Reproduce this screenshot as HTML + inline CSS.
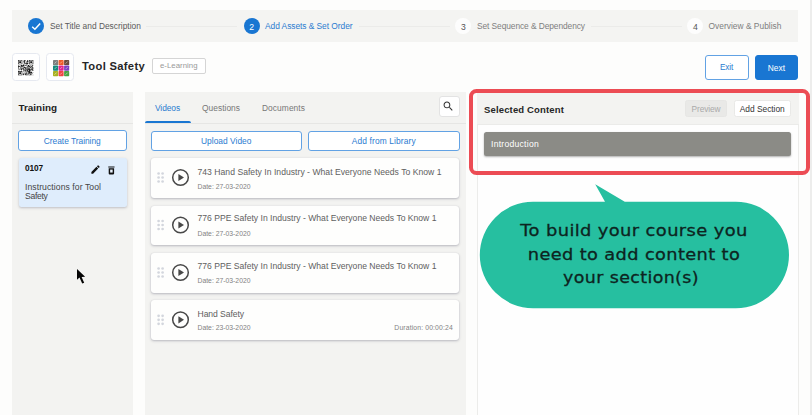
<!DOCTYPE html>
<html lang="en">
<head>
<meta charset="utf-8">
<title>Tool Safety - Add Assets &amp; Set Order</title>
<style>
*{box-sizing:border-box;margin:0;padding:0}
html,body{width:812px;height:415px;overflow:hidden;background:#fdfdfc;font-family:'Liberation Sans',sans-serif}
#app{position:relative;width:812px;height:415px;overflow:hidden;background:#fdfdfc}
.abs{position:absolute}
.t{position:absolute;height:20px;line-height:20px;white-space:nowrap}
.panel{position:absolute;background:#f3f3f1}
.btn{position:absolute;background:#fff;border:1px solid #62a2e4;border-radius:3px}
.card{position:absolute;left:150.5px;width:308.5px;height:39.8px;background:#fefefd;border-radius:3px;box-shadow:0 1px 2.5px rgba(90,90,110,.38),0 0 1px rgba(90,90,110,.18)}
.sq{position:absolute;width:28px;height:28px;top:53.3px;background:#fff;border:1px solid #e6e9f0;border-radius:3.5px}
.line{position:absolute;height:1px;background:#ebebe9;top:25.7px}
.circ{position:absolute;width:16.4px;height:16.4px;border-radius:50%;top:17.7px}
svg{position:absolute;overflow:visible}
</style>
</head>
<body>
<div id="app">

<!-- stepper -->
<div class="panel" style="left:12px;top:10px;width:786px;height:32px;background:#f4f4f2"></div>
<div class="circ" style="left:27.7px;background:#1976d2"></div>
<svg style="left:27.7px;top:17.7px" width="16.4" height="16.4" viewBox="0 0 16.4 16.4"><path d="M4.2 8.8 L6.9 11.3 L12.2 5.6" fill="none" stroke="#fff" stroke-width="1.5"/></svg>
<div class="line" style="left:146px;width:91px"></div>
<div class="circ" style="left:243.500px;background:#1976d2"></div>
<div class="line" style="left:359px;width:91px"></div>
<div class="circ" style="left:454.8px;background:#fdfdfd"></div>
<div class="line" style="left:591px;width:90.5px"></div>
<div class="circ" style="left:686.8px;background:#fdfdfd"></div>

<!-- title row -->
<div class="sq" style="left:11.7px"></div>
<div class="sq" style="left:46.4px"></div>
<svg style="left:17.9px;top:59.9px" width="15.3" height="15.3" viewBox="0 0 15.3 15.3"><path fill="#161616" d="M0.00 0.00h4.28v0.61h-4.28zM6.12 0.00h1.84v0.61h-1.84zM9.18 0.00h0.61v0.61h-0.61zM11.02 0.00h4.28v0.61h-4.28zM0.00 0.61h0.61v0.61h-0.61zM3.67 0.61h0.61v0.61h-0.61zM5.51 0.61h1.22v0.61h-1.22zM9.18 0.61h1.22v0.61h-1.22zM11.02 0.61h0.61v0.61h-0.61zM14.69 0.61h0.61v0.61h-0.61zM0.00 1.22h0.61v0.61h-0.61zM1.22 1.22h1.84v0.61h-1.84zM3.67 1.22h0.61v0.61h-0.61zM5.51 1.22h1.84v0.61h-1.84zM8.57 1.22h1.84v0.61h-1.84zM11.02 1.22h0.61v0.61h-0.61zM12.24 1.22h1.84v0.61h-1.84zM14.69 1.22h0.61v0.61h-0.61zM0.00 1.84h0.61v0.61h-0.61zM1.22 1.84h1.84v0.61h-1.84zM3.67 1.84h0.61v0.61h-0.61zM5.51 1.84h1.22v0.61h-1.22zM7.96 1.84h0.61v0.61h-0.61zM9.18 1.84h1.22v0.61h-1.22zM11.02 1.84h0.61v0.61h-0.61zM12.24 1.84h1.84v0.61h-1.84zM14.69 1.84h0.61v0.61h-0.61zM0.00 2.45h0.61v0.61h-0.61zM1.22 2.45h1.84v0.61h-1.84zM3.67 2.45h0.61v0.61h-0.61zM6.12 2.45h1.22v0.61h-1.22zM8.57 2.45h0.61v0.61h-0.61zM11.02 2.45h0.61v0.61h-0.61zM12.24 2.45h1.84v0.61h-1.84zM14.69 2.45h0.61v0.61h-0.61zM0.00 3.06h0.61v0.61h-0.61zM3.67 3.06h0.61v0.61h-0.61zM6.12 3.06h0.61v0.61h-0.61zM7.34 3.06h3.06v0.61h-3.06zM11.02 3.06h0.61v0.61h-0.61zM14.69 3.06h0.61v0.61h-0.61zM0.00 3.67h4.28v0.61h-4.28zM4.90 3.67h0.61v0.61h-0.61zM6.12 3.67h0.61v0.61h-0.61zM7.34 3.67h0.61v0.61h-0.61zM8.57 3.67h1.22v0.61h-1.22zM11.02 3.67h4.28v0.61h-4.28zM5.51 4.28h0.61v0.61h-0.61zM8.57 4.28h0.61v0.61h-0.61zM0.61 4.90h0.61v0.61h-0.61zM2.45 4.90h1.84v0.61h-1.84zM4.90 4.90h1.22v0.61h-1.22zM7.34 4.90h0.61v0.61h-0.61zM8.57 4.90h0.61v0.61h-0.61zM9.79 4.90h1.22v0.61h-1.22zM12.85 4.90h0.61v0.61h-0.61zM14.08 4.90h1.22v0.61h-1.22zM0.00 5.51h0.61v0.61h-0.61zM3.06 5.51h3.67v0.61h-3.67zM7.34 5.51h1.22v0.61h-1.22zM9.79 5.51h1.84v0.61h-1.84zM12.24 5.51h0.61v0.61h-0.61zM14.08 5.51h0.61v0.61h-0.61zM0.00 6.12h2.45v0.61h-2.45zM3.06 6.12h1.84v0.61h-1.84zM5.51 6.12h0.61v0.61h-0.61zM9.18 6.12h3.06v0.61h-3.06zM12.85 6.12h1.84v0.61h-1.84zM0.00 6.73h0.61v0.61h-0.61zM1.84 6.73h0.61v0.61h-0.61zM3.67 6.73h0.61v0.61h-0.61zM5.51 6.73h1.22v0.61h-1.22zM7.96 6.73h0.61v0.61h-0.61zM11.02 6.73h0.61v0.61h-0.61zM12.24 6.73h0.61v0.61h-0.61zM0.00 7.34h0.61v0.61h-0.61zM2.45 7.34h0.61v0.61h-0.61zM3.67 7.34h0.61v0.61h-0.61zM5.51 7.34h2.45v0.61h-2.45zM8.57 7.34h1.22v0.61h-1.22zM10.40 7.34h0.61v0.61h-0.61zM11.63 7.34h1.22v0.61h-1.22zM13.46 7.34h1.84v0.61h-1.84zM2.45 7.96h0.61v0.61h-0.61zM3.67 7.96h2.45v0.61h-2.45zM7.34 7.96h0.61v0.61h-0.61zM8.57 7.96h1.84v0.61h-1.84zM11.63 7.96h0.61v0.61h-0.61zM13.46 7.96h0.61v0.61h-0.61zM14.69 7.96h0.61v0.61h-0.61zM0.00 8.57h1.22v0.61h-1.22zM1.84 8.57h0.61v0.61h-0.61zM3.06 8.57h1.22v0.61h-1.22zM5.51 8.57h0.61v0.61h-0.61zM6.73 8.57h1.84v0.61h-1.84zM9.79 8.57h2.45v0.61h-2.45zM13.46 8.57h1.84v0.61h-1.84zM1.22 9.18h0.61v0.61h-0.61zM2.45 9.18h1.84v0.61h-1.84zM4.90 9.18h1.22v0.61h-1.22zM6.73 9.18h0.61v0.61h-0.61zM7.96 9.18h6.73v0.61h-6.73zM0.61 9.79h0.61v0.61h-0.61zM3.06 9.79h0.61v0.61h-0.61zM5.51 9.79h1.22v0.61h-1.22zM7.34 9.79h0.61v0.61h-0.61zM9.18 9.79h1.22v0.61h-1.22zM11.02 9.79h1.22v0.61h-1.22zM12.85 9.79h0.61v0.61h-0.61zM14.08 9.79h1.22v0.61h-1.22zM5.51 10.40h0.61v0.61h-0.61zM6.73 10.40h3.67v0.61h-3.67zM11.02 10.40h1.84v0.61h-1.84zM14.69 10.40h0.61v0.61h-0.61zM0.00 11.02h4.28v0.61h-4.28zM5.51 11.02h0.61v0.61h-0.61zM7.34 11.02h1.22v0.61h-1.22zM9.18 11.02h3.06v0.61h-3.06zM0.00 11.63h0.61v0.61h-0.61zM3.67 11.63h0.61v0.61h-0.61zM6.12 11.63h0.61v0.61h-0.61zM9.79 11.63h0.61v0.61h-0.61zM11.02 11.63h3.06v0.61h-3.06zM0.00 12.24h0.61v0.61h-0.61zM1.22 12.24h1.84v0.61h-1.84zM3.67 12.24h0.61v0.61h-0.61zM7.96 12.24h0.61v0.61h-0.61zM9.79 12.24h4.28v0.61h-4.28zM14.69 12.24h0.61v0.61h-0.61zM0.00 12.85h0.61v0.61h-0.61zM1.22 12.85h1.84v0.61h-1.84zM3.67 12.85h0.61v0.61h-0.61zM5.51 12.85h0.61v0.61h-0.61zM6.73 12.85h2.45v0.61h-2.45zM9.79 12.85h0.61v0.61h-0.61zM11.02 12.85h1.22v0.61h-1.22zM12.85 12.85h1.22v0.61h-1.22zM0.00 13.46h0.61v0.61h-0.61zM1.22 13.46h1.84v0.61h-1.84zM3.67 13.46h0.61v0.61h-0.61zM4.90 13.46h0.61v0.61h-0.61zM6.73 13.46h0.61v0.61h-0.61zM8.57 13.46h0.61v0.61h-0.61zM9.79 13.46h1.22v0.61h-1.22zM11.63 13.46h1.22v0.61h-1.22zM14.08 13.46h0.61v0.61h-0.61zM0.00 14.08h0.61v0.61h-0.61zM3.67 14.08h0.61v0.61h-0.61zM4.90 14.08h1.22v0.61h-1.22zM6.73 14.08h1.22v0.61h-1.22zM8.57 14.08h0.61v0.61h-0.61zM9.79 14.08h0.61v0.61h-0.61zM12.24 14.08h1.22v0.61h-1.22zM0.00 14.69h4.28v0.61h-4.28zM4.90 14.69h0.61v0.61h-0.61zM7.34 14.69h2.45v0.61h-2.45zM10.40 14.69h2.45v0.61h-2.45zM13.46 14.69h0.61v0.61h-0.61zM14.69 14.69h0.61v0.61h-0.61z"/></svg>
<svg style="left:52.8px;top:59.7px" width="16.2" height="16.2" viewBox="0 0 16.2 16.2"><rect x="0.00" y="0.00" width="5.1" height="5.1" rx="0.700" fill="#7d7d7d"/><path d="M1.50 3.60l2.100 -2.100" stroke="#fff" stroke-opacity=".6" stroke-width=".8"/><rect x="5.55" y="0.00" width="5.1" height="5.1" rx="0.700" fill="#f05a28"/><path d="M7.05 3.60l2.100 -2.100" stroke="#fff" stroke-opacity=".6" stroke-width=".8"/><rect x="11.10" y="0.00" width="5.1" height="5.1" rx="0.700" fill="#6b4a3c"/><path d="M12.60 3.60l2.100 -2.100" stroke="#fff" stroke-opacity=".6" stroke-width=".8"/><rect x="0.00" y="5.55" width="5.1" height="5.1" rx="0.700" fill="#16877c"/><path d="M1.50 9.15l2.100 -2.100" stroke="#fff" stroke-opacity=".6" stroke-width=".8"/><rect x="5.55" y="5.55" width="5.1" height="5.1" rx="0.700" fill="#e2228c"/><path d="M7.05 9.15l2.100 -2.100" stroke="#fff" stroke-opacity=".6" stroke-width=".8"/><rect x="11.10" y="5.55" width="5.1" height="5.1" rx="0.700" fill="#7a40c2"/><path d="M12.60 9.15l2.100 -2.100" stroke="#fff" stroke-opacity=".6" stroke-width=".8"/><rect x="0.00" y="11.10" width="5.1" height="5.1" rx="0.700" fill="#a9b122"/><path d="M1.50 14.70l2.100 -2.100" stroke="#fff" stroke-opacity=".6" stroke-width=".8"/><rect x="5.55" y="11.10" width="5.1" height="5.1" rx="0.700" fill="#f14444"/><path d="M7.05 14.70l2.100 -2.100" stroke="#fff" stroke-opacity=".6" stroke-width=".8"/><rect x="11.10" y="11.10" width="5.1" height="5.1" rx="0.700" fill="#4aa242"/><path d="M12.60 14.70l2.100 -2.100" stroke="#fff" stroke-opacity=".6" stroke-width=".8"/></svg>
<div class="abs" style="left:152px;top:57.5px;width:53.5px;height:16px;border:1px solid #d5d5d5;border-radius:2px;background:#fff"></div>
<div class="btn" style="left:705px;top:55px;width:43.5px;height:24.5px"></div>
<div class="btn" style="left:755px;top:55px;width:43.2px;height:24.5px;background:#1976d2;border-color:#1976d2"></div>

<!-- left panel -->
<div class="panel" style="left:12px;top:92px;width:121px;height:330px"></div>
<div class="abs" style="left:12px;top:123px;width:121px;height:1px;background:#e6e6e4"></div>
<div class="btn" style="left:18.2px;top:130.3px;width:109.3px;height:20.7px"></div>
<div class="abs" style="left:18.5px;top:157.5px;width:108px;height:49.5px;background:#dfedfc;border-radius:2.5px;box-shadow:0 1px 2.5px rgba(90,90,110,.35)"></div>
<!-- pencil -->
<svg style="left:90.1px;top:164.3px" width="11" height="11" viewBox="0 0 24 24"><path fill="#111" d="M3 17.25V21h3.75L17.81 9.94l-3.75-3.75L3 17.25zM20.71 7.04c.39-.39.39-1.02 0-1.41l-2.34-2.34c-.39-.39-1.02-.39-1.410 0l-1.830 1.830 3.750 3.750 1.830-1.830z"/></svg>
<!-- trash -->
<svg style="left:106.400px;top:164.800px" width="10.800" height="10.800" viewBox="0 0 24 24"><path fill="#111" d="M6 19c0 1.100.9 2 2 2h8c1.100 0 2-.9 2-2V7.500H6V19zM19 3.500H5V5.700h14V3.500z"/><rect x="9.200" y="10.200" width="5.600" height="6.600" fill="#e9f2fd"/></svg>

<!-- middle panel -->
<div class="panel" style="left:144.5px;top:92px;width:321px;height:330px"></div>
<div class="abs" style="left:144.5px;top:123px;width:321px;height:1px;background:#e6e6e4"></div>
<div class="abs" style="left:144.5px;top:121.2px;width:46.5px;height:2.300px;background:#1976d2;border-radius:2px 2px 0 0"></div>
<div class="abs" style="left:439.300px;top:96.3px;width:20.3px;height:20.3px;background:#fff;border:1px solid #e3e3e3;border-radius:3px"></div>
<svg style="left:442.200px;top:100.400px" width="12.500" height="12.500" viewBox="0 0 24 24"><path fill="#333" d="M15.500 14h-.790l-.280-.270C15.410 12.590 16 11.110 16 9.500 16 5.910 13.090 3 9.500 3S3 5.910 3 9.500 5.910 16 9.500 16c1.610 0 3.090-.590 4.230-1.570l.270.280v.790l5 4.990L20.490 19l-4.990-5zm-6 0C7.010 14 5 11.990 5 9.500S7.010 5 9.500 5 14 7.010 14 9.500 11.990 14 9.500 14z"/></svg>
<div class="btn" style="left:151px;top:130.800px;width:151.300px;height:20.200px"></div>
<div class="btn" style="left:308.200px;top:130.800px;width:151.500px;height:20.200px"></div>
<div class="card" style="top:158px"></div>
<svg style="left:0;top:0" width="812" height="415" viewBox="0 0 812 415"><g fill="#d3d6dd"><circle cx="158.6" cy="173.5" r="1.350"/><circle cx="158.6" cy="177.5" r="1.350"/><circle cx="158.6" cy="181.5" r="1.350"/><circle cx="162.6" cy="173.5" r="1.350"/><circle cx="162.6" cy="177.5" r="1.350"/><circle cx="162.6" cy="181.5" r="1.350"/></g><circle cx="180.500" cy="177.5" r="7.800" fill="none" stroke="#484848" stroke-width="1.500"/><path fill="#484848" d="M178.400 173.9 L184 177.5 L178.400 181.1 Z"/></svg>
<div class="card" style="top:205.5px"></div>
<svg style="left:0;top:0" width="812" height="415" viewBox="0 0 812 415"><g fill="#d3d6dd"><circle cx="158.6" cy="221.0" r="1.350"/><circle cx="158.6" cy="225.0" r="1.350"/><circle cx="158.6" cy="229.0" r="1.350"/><circle cx="162.6" cy="221.0" r="1.350"/><circle cx="162.6" cy="225.0" r="1.350"/><circle cx="162.6" cy="229.0" r="1.350"/></g><circle cx="180.500" cy="225.0" r="7.800" fill="none" stroke="#484848" stroke-width="1.500"/><path fill="#484848" d="M178.400 221.4 L184 225.0 L178.400 228.6 Z"/></svg>
<div class="card" style="top:253px"></div>
<svg style="left:0;top:0" width="812" height="415" viewBox="0 0 812 415"><g fill="#d3d6dd"><circle cx="158.6" cy="268.5" r="1.350"/><circle cx="158.6" cy="272.5" r="1.350"/><circle cx="158.6" cy="276.5" r="1.350"/><circle cx="162.6" cy="268.5" r="1.350"/><circle cx="162.6" cy="272.5" r="1.350"/><circle cx="162.6" cy="276.5" r="1.350"/></g><circle cx="180.500" cy="272.5" r="7.800" fill="none" stroke="#484848" stroke-width="1.500"/><path fill="#484848" d="M178.400 268.9 L184 272.5 L178.400 276.1 Z"/></svg>
<div class="card" style="top:300.3px"></div>
<svg style="left:0;top:0" width="812" height="415" viewBox="0 0 812 415"><g fill="#d3d6dd"><circle cx="158.6" cy="315.8" r="1.350"/><circle cx="158.6" cy="319.8" r="1.350"/><circle cx="158.6" cy="323.8" r="1.350"/><circle cx="162.6" cy="315.8" r="1.350"/><circle cx="162.6" cy="319.8" r="1.350"/><circle cx="162.6" cy="323.8" r="1.350"/></g><circle cx="180.500" cy="319.8" r="7.800" fill="none" stroke="#484848" stroke-width="1.500"/><path fill="#484848" d="M178.400 316.2 L184 319.8 L178.400 323.40000000000003 Z"/></svg>


<!-- right panel -->
<div class="abs" style="left:477px;top:92px;width:322px;height:330px;background:#fefefe;border:1px solid #ececea"></div>
<div class="panel" style="left:477px;top:92px;width:322px;height:32px"></div>
<div class="abs" style="left:477px;top:124px;width:322px;height:1px;background:#ebebe9"></div>
<div class="abs" style="left:685.300px;top:100.200px;width:42px;height:16.400px;background:#e9e9e7;border:1px solid #e6e6e4;border-radius:2.500px"></div>
<div class="abs" style="left:733.500px;top:100.200px;width:57.200px;height:16.400px;background:#fff;border:1px solid #e9e9e7;border-radius:2.500px"></div>
<div class="abs" style="left:484px;top:132px;width:307px;height:23.700px;background:#8b8b86;border-radius:2.500px;box-shadow:0 1px 2px rgba(60,60,60,.4)"></div>
<!-- red highlight -->
<div class="abs" style="left:809.800px;top:0;width:2.200px;height:415px;background:#ededec"></div>
<div class="abs" style="left:469px;top:88.800px;width:341.200px;height:85.900px;border:4.600px solid #ec4c54;border-radius:7.500px"></div>
<!-- bubble -->
<svg style="left:0;top:0" width="812" height="415" viewBox="0 0 812 415"><path fill="#26bfa0" d="M533 201.800 H605 L595.200 184.200 L624.800 201.800 H735.800 A53.200 53.200 0 0 1 735.800 308.200 H533 A53.200 53.200 0 0 1 533 201.800 Z"/></svg>

<span class="t" id="t0" style="left:49.9px;top:16.2px;font:400 8.4px/20px 'Liberation Sans',sans-serif;color:#5a5a5a;letter-spacing:0.009px;">Set Title and Description</span>
<span class="t" id="t1" style="left:265px;top:16.2px;font:400 8.4px/20px 'Liberation Sans',sans-serif;color:#2a7bd0;letter-spacing:-0.043px;">Add Assets &amp; Set Order</span>
<span class="t" id="t2" style="left:477px;top:16.2px;font:400 8.4px/20px 'Liberation Sans',sans-serif;color:#7e7e7e;letter-spacing:-0.076px;">Set Sequence &amp; Dependency</span>
<span class="t" id="t3" style="left:708.5px;top:16.2px;font:400 8.4px/20px 'Liberation Sans',sans-serif;color:#7e7e7e;letter-spacing:0.021px;">Overview &amp; Publish</span>
<span class="t" id="t4" style="left:251.7px;transform:translateX(-50%) scaleX(1.0000);top:16.9px;font:400 8.6px/20px 'Liberation Sans',sans-serif;color:#fff;">2</span>
<span class="t" id="t5" style="left:463.5px;transform:translateX(-50%) scaleX(1.0000);top:16.9px;font:400 8.6px/20px 'Liberation Sans',sans-serif;color:#555;">3</span>
<span class="t" id="t6" style="left:695.4px;transform:translateX(-50%) scaleX(1.0000);top:16.9px;font:400 8.6px/20px 'Liberation Sans',sans-serif;color:#555;">4</span>
<span class="t" id="t7" style="left:82px;top:55.8px;font:700 11.2px/20px 'Liberation Sans',sans-serif;color:#262626;letter-spacing:0.321px;">Tool Safety</span>
<span class="t" id="t8" style="left:160px;top:56.0px;font:400 7.8px/20px 'Liberation Sans',sans-serif;color:#999;letter-spacing:0.022px;">e-Learning</span>
<span class="t" id="t9" style="left:720px;top:58.3px;font:400 8.2px/20px 'Liberation Sans',sans-serif;color:#2a7bd0;letter-spacing:-0.164px;">Exit</span>
<span class="t" id="t10" style="left:767.75px;top:58.0px;font:400 8.4px/20px 'Liberation Sans',sans-serif;color:#fff;letter-spacing:0.066px;">Next</span>
<span class="t" id="t11" style="left:18.5px;top:98.2px;font:700 9.9px/20px 'Liberation Sans',sans-serif;color:#222;letter-spacing:0.012px;">Training</span>
<span class="t" id="t12" style="left:43.75px;top:130.5px;font:400 8.4px/20px 'Liberation Sans',sans-serif;color:#2a7bd0;letter-spacing:-0.018px;">Create Training</span>
<span class="t" id="t13" style="left:25px;top:158.3px;font:700 8.3px/20px 'Liberation Sans',sans-serif;color:#111;letter-spacing:-0.117px;">0107</span>
<span class="t" id="t14" style="left:25px;top:176.7px;font:400 8.6px/20px 'Liberation Sans',sans-serif;color:#444;letter-spacing:0.078px;">Instructions for Tool</span>
<span class="t" id="t15" style="left:25px;top:185.6px;font:400 8.6px/20px 'Liberation Sans',sans-serif;color:#444;letter-spacing:-0.312px;">Safety</span>
<span class="t" id="t16" style="left:155px;top:98.0px;font:400 8.4px/20px 'Liberation Sans',sans-serif;color:#2a7bd0;letter-spacing:-0.078px;">Videos</span>
<span class="t" id="t17" style="left:202px;top:98.0px;font:400 8.4px/20px 'Liberation Sans',sans-serif;color:#777;letter-spacing:0.031px;">Questions</span>
<span class="t" id="t18" style="left:262px;top:98.0px;font:400 8.4px/20px 'Liberation Sans',sans-serif;color:#777;letter-spacing:0.071px;">Documents</span>
<span class="t" id="t19" style="left:201px;top:130.5px;font:400 8.4px/20px 'Liberation Sans',sans-serif;color:#2a7bd0;letter-spacing:0.030px;">Upload Video</span>
<span class="t" id="t20" style="left:351.75px;top:130.5px;font:400 8.4px/20px 'Liberation Sans',sans-serif;color:#2a7bd0;letter-spacing:0.131px;">Add from Library</span>
<span class="t" id="t21" style="left:197.5px;top:162.0px;font:400 8.6px/20px 'Liberation Sans',sans-serif;color:#606060;letter-spacing:0.025px;">743 Hand Safety In Industry - What Everyone Needs To Know 1</span>
<span class="t" id="t22" style="left:197.5px;top:176.7px;font:400 6.8px/20px 'Liberation Sans',sans-serif;color:#828282;letter-spacing:0.006px;">Date: 27-03-2020</span>
<span class="t" id="t23" style="left:197.5px;top:208.1px;font:400 8.6px/20px 'Liberation Sans',sans-serif;color:#606060;letter-spacing:-0.003px;">776 PPE Safety In Industry - What Everyone Needs To Know 1</span>
<span class="t" id="t24" style="left:197.5px;top:223.7px;font:400 6.8px/20px 'Liberation Sans',sans-serif;color:#828282;letter-spacing:0.006px;">Date: 27-03-2020</span>
<span class="t" id="t25" style="left:197.5px;top:256.2px;font:400 8.6px/20px 'Liberation Sans',sans-serif;color:#606060;letter-spacing:-0.003px;">776 PPE Safety In Industry - What Everyone Needs To Know 1</span>
<span class="t" id="t26" style="left:197.5px;top:271.2px;font:400 6.8px/20px 'Liberation Sans',sans-serif;color:#828282;letter-spacing:0.006px;">Date: 27-03-2020</span>
<span class="t" id="t27" style="left:197.5px;top:303.7px;font:400 8.6px/20px 'Liberation Sans',sans-serif;color:#606060;letter-spacing:-0.072px;">Hand Safety</span>
<span class="t" id="t28" style="left:197.5px;top:318.0px;font:400 6.8px/20px 'Liberation Sans',sans-serif;color:#828282;letter-spacing:0.006px;">Date: 23-03-2020</span>
<span class="t" id="t29" style="right:359.2px;top:318.0px;font:400 6.8px/20px 'Liberation Sans',sans-serif;color:#828282;letter-spacing:0.142px;">Duration: 00:00:24</span>
<span class="t" id="t30" style="left:484px;top:100.2px;font:700 9.5px/20px 'Liberation Sans',sans-serif;color:#262626;letter-spacing:0.149px;">Selected Content</span>
<span class="t" id="t31" style="left:691.5px;top:98.7px;font:400 8.3px/20px 'Liberation Sans',sans-serif;color:#aaa;letter-spacing:-0.074px;">Preview</span>
<span class="t" id="t32" style="left:739.75px;top:98.7px;font:400 8.4px/20px 'Liberation Sans',sans-serif;color:#333;letter-spacing:-0.016px;">Add Section</span>
<span class="t" id="t33" style="left:491px;top:134.0px;font:400 8.6px/20px 'Liberation Sans',sans-serif;color:#fff;letter-spacing:0.257px;">Introduction</span>
<span class="t" id="t34" style="left:634px;transform:translateX(-50%) scaleX(1.0972);top:221.0px;font:400 16.3px/20px 'DejaVu Sans','Liberation Sans',sans-serif;color:#0d2421;letter-spacing:0.350px;-webkit-text-stroke:0.3px #0d2421;">To build your course you</span>
<span class="t" id="t35" style="left:634px;transform:translateX(-50%) scaleX(1.0904);top:244.6px;font:400 16.3px/20px 'DejaVu Sans','Liberation Sans',sans-serif;color:#0d2421;letter-spacing:0.350px;-webkit-text-stroke:0.3px #0d2421;">need to add content to</span>
<span class="t" id="t36" style="left:631.3px;transform:translateX(-50%) scaleX(1.0703);top:267.8px;font:400 16.3px/20px 'DejaVu Sans','Liberation Sans',sans-serif;color:#0d2421;letter-spacing:0.350px;-webkit-text-stroke:0.3px #0d2421;">your section(s)</span>

<!-- cursor -->
<svg style="left:77.100px;top:268.500px" width="10" height="16" viewBox="0 0 10 16"><path fill="#050505" d="M0 0 L0 10.800 L2.500 8.600 L5.200 14.600 L7.200 13.700 L4.600 7.900 L8.100 7.700 Z"/></svg>
</div>
</body>
</html>
